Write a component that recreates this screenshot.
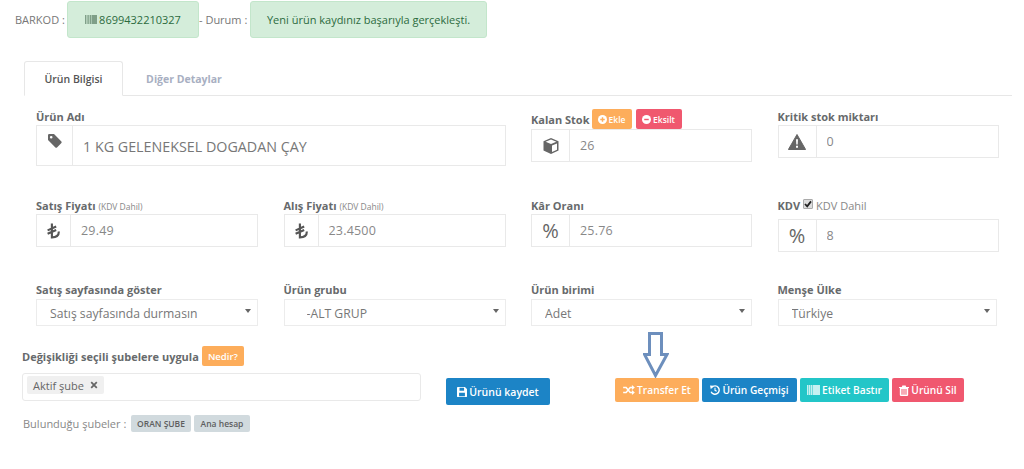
<script>
  let active = 'info';
</script>

<div class="page">
  <div class="topbar">
    <span class="top-label">BARKOD :</span>
    <div class="alert code">
      <svg class="barcode" viewBox="0 0 12 9" width="12" height="9"><path d="M0 0h1v9H0zM1.600 0h1v9h-1zM3.200 0h1.200v9H3.200zM5 0h1v9H5zM6.500 0h5.500v9H6.500z" fill="#7f9f88" /></svg>
      8699432210327
    </div>
    <span class="top-label durum">- Durum :</span>
    <div class="alert msg">Yeni ürün kaydınız başarıyla gerçekleşti.</div>
  </div>

  <div class="tabs">
    <button class="tab" class:active={active === 'info'} on:click={() => (active = 'info')}>Ürün Bilgisi</button>
    <button class="tab" class:active={active === 'other'} on:click={() => (active = 'other')}>Diğer Detaylar</button>
  </div>

  <div class="form">
    <div class="field wide">
      <label for="name">Ürün Adı</label>
      <div class="group tall">
        <span class="addon name-addon">
          <svg class="tag" viewBox="0 0 16 16" width="16" height="16"><path fill-rule="evenodd" d="M1 2.200Q1 1 2.200 1H7L14.400 8.400Q15 9.200 14.400 10L10 14.400Q9.200 15 8.400 14.400L1 7zM4.200 3A1.300 1.300 0 1 0 4.200 5.600 1.300 1.300 0 1 0 4.200 3z" fill="#666" /></svg>
        </span>
        <input id="name" class="big" value="1 KG GELENEKSEL DOGADAN ÇAY" />
      </div>
    </div>

    <div class="field">
      <div class="label-row stock">
        <label for="stock">Kalan Stok</label>
        <span class="mini orange">
          <svg viewBox="0 0 10 10" width="9" height="9"><circle cx="5" cy="5" r="5" fill="#fff" /><path d="M2.500 5h5M5 2.500v5" stroke="#fdad5b" stroke-width="1.600" /></svg>
          Ekle
        </span>
        <span class="mini red">
          <svg viewBox="0 0 10 10" width="9" height="9"><circle cx="5" cy="5" r="5" fill="#fff" /><path d="M2.500 5h5" stroke="#f0586f" stroke-width="1.600" /></svg>
          Eksilt
        </span>
      </div>
      <div class="group">
        <span class="addon">
          <svg viewBox="0 0 18 18" width="18" height="18"><path d="M9 1L16.500 4.200V13.600L9 17 1.500 13.600V4.200z" fill="#666" /><path d="M9 2.600L14.400 4.800 9 7 3.600 4.800z" fill="#fff" /><path d="M10 8.600L15 6.400V12.800L10 15z" fill="#fff" /></svg>
        </span>
        <input id="stock" value="26" />
      </div>
    </div>

    <div class="field">
      <label for="critical">Kritik stok miktarı</label>
      <div class="group">
        <span class="addon">
          <svg viewBox="0 0 18 16" width="18" height="16"><path d="M9 0.500L17.600 15.500H0.400z" fill="#666" stroke="#666" stroke-linejoin="round" /><path d="M8 5.200h2L9.700 10.600H8.300zM8 11.800h2v2H8z" fill="#fff" /></svg>
        </span>
        <input id="critical" value="0" />
      </div>
    </div>

    <div class="field row2">
      <label for="sale">Satış Fiyatı <small>(KDV Dahil)</small></label>
      <div class="group">
        <span class="addon lira-addon">
          <svg viewBox="0 0 14 16" width="15" height="18"><path d="M5.500 1V14C9.500 14 12 12 12 8.500M1.500 7.400L9.500 3.800M1.500 10.600L9.500 7" fill="none" stroke="#555" stroke-width="2" /></svg>
        </span>
        <input id="sale" value="29.49" />
      </div>
    </div>

    <div class="field row2">
      <label for="buy">Alış Fiyatı <small>(KDV Dahil)</small></label>
      <div class="group">
        <span class="addon lira-addon">
          <svg viewBox="0 0 14 16" width="15" height="18"><path d="M5.500 1V14C9.500 14 12 12 12 8.500M1.500 7.400L9.500 3.800M1.500 10.600L9.500 7" fill="none" stroke="#555" stroke-width="2" /></svg>
        </span>
        <input id="buy" value="23.4500" />
      </div>
    </div>

    <div class="field row2">
      <label for="margin">Kâr Oranı</label>
      <div class="group">
        <span class="addon percent">%</span>
        <input id="margin" value="25.76" />
      </div>
    </div>

    <div class="field row2">
      <div class="label-row kdv">
        <label for="vat">KDV</label>
        <span class="check"><svg viewBox="0 0 10 10" width="10" height="10"><path d="M2 5l2.200 2.400L8 2.400" fill="none" stroke="#222" stroke-width="1.800" /></svg></span>
        <span class="kdv-text">KDV Dahil</span>
      </div>
      <div class="group">
        <span class="addon percent">%</span>
        <input id="vat" value="8" />
      </div>
    </div>

    <div class="field row3">
      <label for="show">Satış sayfasında göster</label>
      <div class="select-wrap">
        <select id="show"><option>Satış sayfasında durmasın</option></select>
      </div>
    </div>

    <div class="field row3">
      <label for="group">Ürün grubu</label>
      <div class="select-wrap">
        <select id="group" class="indent"><option>-ALT GRUP</option></select>
      </div>
    </div>

    <div class="field row3">
      <label for="unit">Ürün birimi</label>
      <div class="select-wrap">
        <select id="unit"><option>Adet</option></select>
      </div>
    </div>

    <div class="field row3">
      <label for="country">Menşe Ülke</label>
      <div class="select-wrap narrow">
        <select id="country"><option>Türkiye</option></select>
      </div>
    </div>
  </div>

  <div class="branches">
    <div class="branch-col">
      <div class="label-row nedir">
        <span class="label">Değişikliği seçili şubelere uygula</span>
        <span class="mini orange what">Nedir?</span>
      </div>
      <div class="tags">
        <span class="chip">Aktif şube
          <svg viewBox="0 0 10 10" width="8" height="8"><path d="M1.500 1.500l7 7M8.500 1.500l-7 7" stroke="#666" stroke-width="2.200" /></svg>
        </span>
      </div>
      <div class="found">
        <span class="found-label">Bulunduğu şubeler :</span>
        <span class="badge upper">ORAN ŞUBE</span>
        <span class="badge">Ana hesap</span>
      </div>
    </div>

    <button class="btn blue save">
      <svg viewBox="0 0 12 12" width="10" height="10"><path fill-rule="evenodd" d="M0 1Q0 0 1 0H9.500L12 2.500V11Q12 12 11 12H1Q0 12 0 11zM3 1V4.500H8.500V1zM2.500 7V11H9.500V7z" fill="#fff" /></svg>
      Ürünü kaydet
    </button>

    <div class="actions">
      <svg class="arrow" viewBox="0 0 26 46" width="26" height="46"><path d="M6.500 1.500H18.500V22.500H24L12.500 43.500 1.500 22.500H6.500z" fill="#fff" stroke="#6d8fbd" stroke-width="3" /></svg>
      <button class="btn orange">
        <svg viewBox="0 0 14 12" width="12" height="10"><path d="M0 3H3.500L8.500 9H11M0 9H3.500L8.500 3H11" fill="none" stroke="#fff" stroke-width="1.800" /><path d="M10.500 0L14 3 10.500 6zM10.500 6L14 9 10.500 12z" fill="#fff" /></svg>
        Transfer Et
      </button>
      <button class="btn blue">
        <svg viewBox="0 0 12 12" width="10" height="10"><path d="M2.400 2.600A5 5 0 1 1 1.400 8" fill="none" stroke="#fff" stroke-width="1.700" /><path d="M0 0.500L4.600 1 1 5z" fill="#fff" /><path d="M6 3.400V6.400L8 7.600" fill="none" stroke="#fff" stroke-width="1.300" /></svg>
        Ürün Geçmişi
      </button>
      <button class="btn teal">
        <svg viewBox="0 0 13 10" width="13" height="10"><path d="M0 0h1.500v10H0zM2 0h1.500v10H2zM4 0h1.500v10H4zM6 0h7v10H6z" fill="#fff" opacity=".75" /></svg>
        Etiket Bastır
      </button>
      <button class="btn red">
        <svg viewBox="0 0 12 13" width="10" height="11"><path fill-rule="evenodd" d="M0 2.200H12V3.400H11V12Q11 13 10 13H2Q1 13 1 12V3.400H0zM4 0.400H8L8.600 2.200H3.400zM3 4.600V11.600H4.200V4.600zM5.400 4.600V11.600H6.600V4.600zM7.800 4.600V11.600H9V4.600z" fill="#fff" /></svg>
        Ürünü Sil
      </button>
    </div>
  </div>
</div>

<style>
  :global(body) {
    background: #fff;
    font-family: "Open Sans", "Noto Sans", sans-serif;
    color: #777;
  }

  .page {
    width: 1024px;
    height: 469px;
    overflow: hidden;
    font-size: 11px;
  }

  .topbar {
    display: flex;
    align-items: center;
    height: 37px;
    margin-top: 1px;
    padding-left: 15px;
  }

  .top-label {
    width: 52px;
    color: #777;
    font-size: 11px;
  }

  .top-label.durum {
    width: 51px;
  }

  .alert {
    box-sizing: border-box;
    height: 37px;
    display: flex;
    align-items: center;
    justify-content: center;
    background: #d4edda;
    border: 1px solid #c3e6cb;
    border-radius: 3px;
    color: #2c6b3e;
    font-size: 11px;
  }

  .code {
    width: 132px;
    gap: 2px;
  }

  .msg {
    width: 237px;
  }

  .tabs {
    display: flex;
    box-sizing: border-box;
    width: 988px;
    height: 35px;
    margin: 23px 0 0 24px;
    border-bottom: 1px solid #e7e7e7;
  }

  .tab {
    height: 35px;
    width: 99px;
    padding: 0;
    border: 0;
    background: none;
    font: 700 10.5px "Open Sans", sans-serif;
    color: #a8afc2;
    cursor: pointer;
  }

  .tab + .tab {
    width: 122px;
  }

  .tab.active {
    font-weight: 600;
    color: #555;
    background: #fff;
    border: 1px solid #e7e7e7;
    border-bottom-color: #fff;
    border-radius: 3px 3px 0 0;
  }

  .form {
    display: grid;
    grid-template-columns: 222px 222px 221px 221px;
    column-gap: 25.5px;
    align-items: start;
    padding: 13px 0 0 36px;
  }

  .field.wide {
    grid-column: span 2;
  }

  .field.row2 {
    margin-top: 32px;
  }

  .field.row3 {
    margin-top: 31px;
  }

  label,
  .label {
    display: block;
    height: 16px;
    line-height: 15px;
    font-size: 11px;
    font-weight: 700;
    color: #676a6c;
    white-space: nowrap;
  }

  .row3 label {
    line-height: 13px;
  }

  label small {
    font-size: 8.5px;
    font-weight: 400;
    color: #888;
  }

  .label-row {
    display: flex;
    align-items: center;
  }

  .label-row label {
    height: auto;
  }

  .stock {
    height: 20px;
    gap: 2px;
  }

  .kdv {
    height: 21px;
    gap: 3px;
    align-items: flex-start;
  }

  .check {
    display: flex;
    width: 10px;
    height: 10px;
    margin-top: 1px;
    background: #ddd;
    border: 1px solid #aaa;
    border-radius: 1px;
    box-sizing: border-box;
    align-items: center;
    justify-content: center;
  }

  .check svg {
    flex: none;
  }

  .kdv-text {
    font-size: 11px;
    line-height: 15px;
    color: #888;
  }

  .mini {
    display: inline-flex;
    align-items: center;
    justify-content: center;
    gap: 2px;
    height: 20px;
    box-sizing: border-box;
    border-radius: 2px;
    color: #fff;
    font-size: 8.5px;
    font-weight: 600;
  }

  .mini.orange {
    width: 40px;
    background: #fdad5b;
  }

  .mini.red {
    width: 46px;
    margin-left: 2px;
    background: #f0586f;
  }

  .mini.what {
    width: 42px;
    margin-left: 3px;
    font-size: 9.5px;
  }

  .group {
    display: flex;
    box-sizing: border-box;
    height: 33px;
    border: 1px solid #e9e9e9;
    background: #fff;
  }

  .group.tall {
    height: 41px;
  }

  .addon {
    flex: none;
    display: flex;
    align-items: center;
    justify-content: center;
    box-sizing: border-box;
    width: 38px;
    border-right: 1px solid #e9e9e9;
    color: #555;
  }

  .lira-addon {
    width: 34px;
  }

  .name-addon {
    width: 36px;
    align-items: flex-start;
    padding-top: 7px;
  }

  .percent {
    font-size: 20px;
    color: #666;
  }

  .group input {
    flex: 1;
    min-width: 0;
    border: 0;
    outline: 0;
    padding: 0 0 0 10px;
    background: transparent;
    font: 12.5px "Open Sans", sans-serif;
    letter-spacing: 0.2px;
    color: #888;
  }

  .group input.big {
    font-size: 14.3px;
    letter-spacing: 0;
    padding-top: 2px;
    color: #777;
  }

  .select-wrap {
    position: relative;
    height: 27px;
    box-sizing: border-box;
    border: 1px solid #ececec;
  }

  .select-wrap.narrow {
    width: 219px;
  }

  .select-wrap::after {
    content: "";
    position: absolute;
    right: 6px;
    top: 9px;
    border: 3px solid transparent;
    border-top: 4px solid #666;
    border-bottom: 0;
  }

  select {
    appearance: none;
    width: 100%;
    height: 100%;
    padding: 2px 0 0 13px;
    border: 0;
    outline: 0;
    background: transparent;
    font: 12.2px "Open Sans", sans-serif;
    color: #777;
  }

  select.indent {
    padding-left: 22px;
  }

  .branches {
    display: flex;
    align-items: flex-start;
    padding: 20px 0 0 22px;
  }

  .branch-col {
    width: 399px;
  }

  .nedir {
    height: 20px;
  }

  .nedir .label {
    line-height: 17px;
  }

  .tags {
    display: flex;
    align-items: flex-start;
    box-sizing: border-box;
    height: 28px;
    margin-top: 7px;
    padding: 2px 4px;
    border: 1px solid #e9e9e9;
    border-radius: 3px;
  }

  .chip {
    display: flex;
    align-items: center;
    justify-content: center;
    gap: 6px;
    box-sizing: border-box;
    width: 77px;
    height: 18px;
    background: #f0f0f0;
    border-radius: 2px;
    color: #666;
    font-size: 11px;
  }

  .found {
    display: flex;
    align-items: center;
    gap: 3px;
    height: 17px;
    margin-top: 14px;
    font-size: 11px;
    color: #888;
  }

  .found-label {
    width: 105px;
    margin-left: 1px;
    white-space: nowrap;
  }

  .badge {
    display: flex;
    align-items: center;
    justify-content: center;
    height: 17px;
    width: 56px;
    background: #d1dade;
    border-radius: 2px;
    font-size: 8.5px;
    font-weight: 600;
    color: #5e5e5e;
  }

  .badge.upper {
    width: 60px;
  }

  .btn {
    display: inline-flex;
    align-items: center;
    justify-content: center;
    gap: 2px;
    box-sizing: border-box;
    height: 24px;
    padding: 0;
    border: 0;
    border-radius: 2px;
    color: #fff;
    font: 600 10.2px "Open Sans", sans-serif;
    cursor: pointer;
  }

  .btn.orange {
    width: 84px;
    background: #fdad5b;
  }

  .btn.blue {
    width: 95px;
    background: #1c84c6;
  }

  .btn.teal {
    width: 89px;
    background: #23c6c8;
  }

  .btn.red {
    width: 72px;
    background: #f0586f;
  }

  .btn.save {
    width: 104px;
    height: 27px;
    margin: 32px 0 0 25px;
    font-size: 10.5px;
  }

  .actions {
    position: relative;
    display: flex;
    gap: 3px;
    margin: 32px 0 0 65px;
  }

  .arrow {
    position: absolute;
    left: 28px;
    top: -46px;
  }
</style>
